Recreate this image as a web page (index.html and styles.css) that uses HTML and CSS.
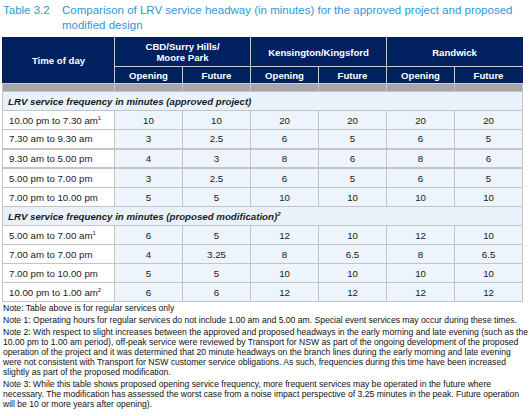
FILE: index.html
```html
<!DOCTYPE html>
<html>
<head>
<meta charset="utf-8">
<link rel="stylesheet" href="styles.css">
</head>
<body>
<div class="page">
  <div class="title">
    <span class="tnum">Table 3.2</span>
    <span class="ttext">Comparison of LRV service headway (in minutes) for the approved project and proposed<br>modified design</span>
  </div>
  <table class="tbl">
    <colgroup>
      <col class="c1"><col class="cn"><col class="cn"><col class="cn"><col class="cn"><col class="cn"><col class="cn">
    </colgroup>
    <thead>
      <tr class="h1">
        <th rowspan="2">Time of day</th>
        <th colspan="2">CBD/Surry Hills/<br>Moore Park</th>
        <th colspan="2">Kensington/Kingsford</th>
        <th colspan="2">Randwick</th>
      </tr>
      <tr class="h2">
        <th>Opening</th><th>Future</th><th>Opening</th><th>Future</th><th>Opening</th><th>Future</th>
      </tr>
      <tr class="gap"><td></td><td></td><td></td><td></td><td></td><td></td><td></td></tr>
    </thead>
    <tbody>
      <tr class="sec"><td colspan="7">LRV service frequency in minutes (approved project)</td></tr>
      <tr><td>10.00 pm to 7.30 am<sup>1</sup></td><td>10</td><td>10</td><td>20</td><td>20</td><td>20</td><td>20</td></tr>
      <tr class="thick"><td>7.30 am to 9.30 am</td><td>3</td><td>2.5</td><td>6</td><td>5</td><td>6</td><td>5</td></tr>
      <tr class="thick"><td>9.30 am to 5.00 pm</td><td>4</td><td>3</td><td>8</td><td>6</td><td>8</td><td>6</td></tr>
      <tr><td>5.00 pm to 7.00 pm</td><td>3</td><td>2.5</td><td>6</td><td>5</td><td>6</td><td>5</td></tr>
      <tr><td>7.00 pm to 10.00 pm</td><td>5</td><td>5</td><td>10</td><td>10</td><td>10</td><td>10</td></tr>
      <tr class="sec"><td colspan="7">LRV service frequency in minutes (proposed modification)<sup>2</sup></td></tr>
      <tr><td>5.00 am to 7.00 am<sup>1</sup></td><td>6</td><td>5</td><td>12</td><td>10</td><td>12</td><td>10</td></tr>
      <tr><td>7.00 am to 7.00 pm</td><td>4</td><td>3.25</td><td>8</td><td>6.5</td><td>8</td><td>6.5</td></tr>
      <tr><td>7.00 pm to 10.00 pm</td><td>5</td><td>5</td><td>10</td><td>10</td><td>10</td><td>10</td></tr>
      <tr><td>10.00 pm to 1.00 am<sup>2</sup></td><td>6</td><td>6</td><td>12</td><td>12</td><td>12</td><td>12</td></tr>
    </tbody>
  </table>
  <div class="notes">
    <p>Note: Table above is for regular services only</p>
    <p>Note 1: Operating hours for regular services do not include 1.00 am and 5.00 am. Special event services may occur during these times.</p>
    <p>Note 2: With respect to slight increases between the approved and proposed headways in the early morning and late evening (such as the<br>10.00 pm to 1.00 am period), off-peak service were reviewed by Transport for NSW as part of the ongoing development of the proposed<br>operation of the project and it was determined that 20 minute headways on the branch lines during the early morning and late evening<br>were not consistent with Transport for NSW customer service obligations. As such, frequencies during this time have been increased<br>slightly as part of the proposed modification.</p>
    <p>Note 3: While this table shows proposed opening service frequency, more frequent services may be operated in the future where<br>necessary. The modification has assessed the worst case from a noise impact perspective of 3.25 minutes in the peak. Future operation<br>will be 10 or more years after opening).</p>
  </div>
</div>
</body>
</html>
```
FILE: styles.css
```css
html, body {
  margin: 0;
  padding: 0;
  background: #ffffff;
}
body {
  font-family: "Liberation Sans", Arial, sans-serif;
  color: #1a1a1a;
}
.page {
  padding: 3px 0 0 2px;
}
.title {
  display: flex;
  color: #2f98d4;
  font-size: 11.5px;
  line-height: 15px;
  padding-left: 1px;
  height: 34px;
}
.tnum {
  width: 59px;
  flex: none;
}
.tbl {
  border-collapse: collapse;
  table-layout: fixed;
  width: 521px;
  font-size: 9.7px;
}
.c1 { width: 112px; }
.cn { width: 68px; }
.tbl th {
  background: #002060;
  color: #ffffff;
  font-weight: bold;
  font-size: 9.6px;
  line-height: 11px;
  text-align: center;
  border: 1px solid #c9ccd6;
  padding: 0;
}
.h1 th { height: 28px; }
.h2 th { height: 16px; }
.tbl thead tr.h1 th { border-top-color: #002060; }
.tbl tr.h1 th:first-child { border-left-color: #002060; }
.tbl tr.h1 th:last-child, .tbl tr.h2 th:last-child { border-right-color: #002060; }
.gap td {
  background: #a6a6a6;
  height: 7px;
  padding: 0;
  border-left: 1px solid #c8c8c8;
  border-right: 1px solid #c8c8c8;
}
.tbl tbody td {
  height: 18px;
  padding: 0;
  text-align: center;
  background: #edf4fb;
  border: 1px solid #c4c4c4;
  line-height: 11px;
}
.tbl tbody td:first-child {
  background: #ffffff;
  text-align: left;
  padding-left: 6px;
}
.tbl tbody tr.sec td {
  background: #e9f2fb;
  text-align: left;
  font-weight: bold;
  font-style: italic;
  padding-left: 5px;
  height: 18px;
}
.tbl tbody tr.thick td {
  height: 17.5px;
  border-bottom: 2px solid #c4c4c4;
}
sup {
  font-size: 6px;
  line-height: 0;
  vertical-align: 4px;
}
.notes {
  font-size: 8.6px;
  line-height: 10px;
  padding-left: 1px;
  padding-top: 1px;
  white-space: nowrap;
  color: #111111;
}
.notes p {
  margin: 0 0 2px 0;
}
```
